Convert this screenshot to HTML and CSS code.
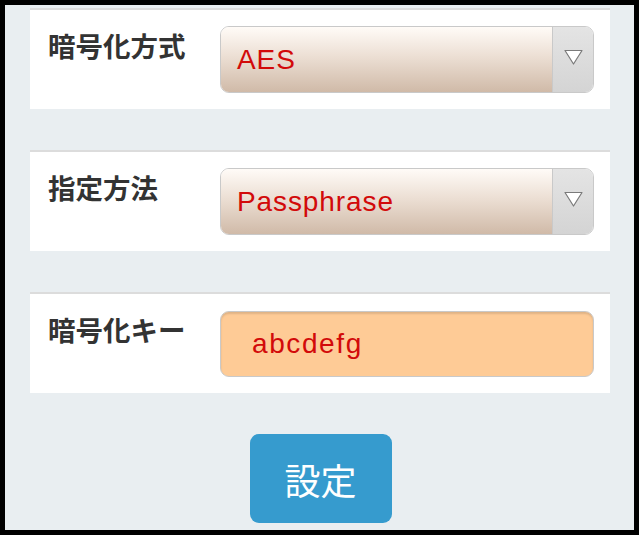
FILE: index.html
```html
<!DOCTYPE html>
<html lang="ja">
<head>
<meta charset="utf-8">
<title>暗号化設定</title>
<link rel="stylesheet" href="styles.css">
</head>
<body>
<div class="screen">
  <section class="card">
    <div class="label">暗号化方式</div>
    <div class="select">
      <div class="select-value">AES</div>
      <div class="select-btn">
        <svg width="19" height="16" viewBox="0 0 19 16"><path d="M1 1.5 L18 1.5 L9.5 15 Z" fill="#fff" stroke="#7a7a7a" stroke-width="1.2" stroke-linejoin="round"/></svg>
      </div>
    </div>
  </section>
  <section class="card">
    <div class="label">指定方法</div>
    <div class="select">
      <div class="select-value">Passphrase</div>
      <div class="select-btn">
        <svg width="19" height="16" viewBox="0 0 19 16"><path d="M1 1.5 L18 1.5 L9.5 15 Z" fill="#fff" stroke="#7a7a7a" stroke-width="1.2" stroke-linejoin="round"/></svg>
      </div>
    </div>
  </section>
  <section class="card">
    <div class="label">暗号化キー</div>
    <div class="input">abcdefg</div>
  </section>
  <div class="actions">
    <button class="btn">設定</button>
  </div>
</div>
</body>
</html>
```
FILE: styles.css
```css
html, body {
  margin: 0;
  padding: 0;
  background: #000;
}
body {
  padding: 5px;
  width: 629px;
  height: 525px;
}
.screen {
  width: 629px;
  height: 525px;
  background: #e9eef1;
  padding-top: 3px;
  box-sizing: border-box;
  overflow: hidden;
}
.card {
  margin: 0 24px 41px 25px;
  background: #fff;
  border-top: 2px solid #dcdcdc;
  height: 99px;
  display: flex;
  align-items: flex-start;
  box-sizing: content-box;
}
.label {
  width: 172px;
  padding-left: 18px;
  padding-top: 21px;
  font-family: "Noto Sans CJK JP", sans-serif;
  font-weight: 700;
  font-size: 27.5px;
  line-height: 28px;
  color: #333;
}
.select {
  margin-top: 16px;
  width: 374px;
  height: 67px;
  box-sizing: border-box;
  border: 1px solid #c9c9c9;
  border-radius: 9px;
  overflow: hidden;
  display: flex;
}
.select-value {
  flex: 1;
  display: flex;
  align-items: center;
  padding-left: 16px;
  background: linear-gradient(#fffbf7, #ecdfd4 45%, #d0baa8);
  font-family: "Liberation Sans", Arial, sans-serif;
  font-size: 28px;
  letter-spacing: 0.9px;
  color: #d20a0a;
}
.select-btn {
  width: 41px;
  border-left: 1px solid #c9c9c9;
  background: linear-gradient(#e4e4e4, #d4d4d4);
  display: flex;
  justify-content: center;
  padding-top: 22px;
  box-sizing: border-box;
}
.input {
  margin-top: 17px;
  width: 374px;
  height: 66px;
  box-sizing: border-box;
  border: 1px solid #c9c9c9;
  border-radius: 9px;
  background: #fecb96;
  box-shadow: inset 0 2px 2px rgba(0,0,0,0.12);
  display: flex;
  align-items: center;
  padding-left: 31px;
  font-family: "Liberation Sans", Arial, sans-serif;
  font-size: 28px;
  letter-spacing: 1.6px;
  color: #d20a0a;
}
.actions {
  display: flex;
  justify-content: center;
  padding-left: 2px;
}
.btn {
  width: 142px;
  height: 89px;
  border: none;
  border-radius: 9px;
  background: #369bce;
  color: #fff;
  font-family: "Noto Sans CJK JP", sans-serif;
  font-size: 36px;
  font-weight: 400;
  padding: 0;
}
```
